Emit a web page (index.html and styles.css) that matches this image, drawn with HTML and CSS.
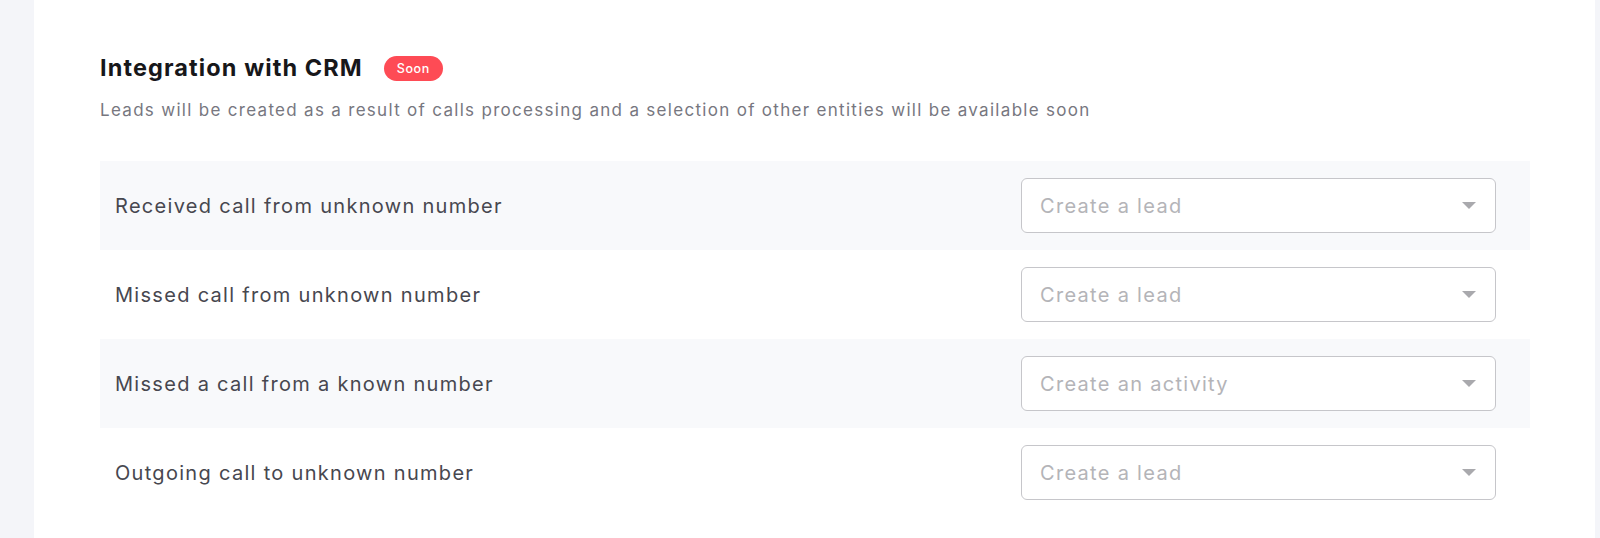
FILE: index.html
```html
<!DOCTYPE html>
<html lang="en">
<head>
<meta charset="utf-8">
<title>Integration with CRM</title>
<link rel="stylesheet" href="styles.css">
</head>
<body>
<div class="page">
  <main class="card">
    <header class="head">
      <div class="title-line">
        <h2 class="title">Integration with CRM</h2>
        <span class="badge">Soon</span>
      </div>
      <p class="subtitle">Leads will be created as a result of calls processing and a selection of other entities will be available soon</p>
    </header>
    <div class="rows">
      <div class="row shaded">
        <span class="label">Received call from unknown number</span>
        <div class="select"><span class="placeholder">Create a lead</span><span class="caret"></span></div>
      </div>
      <div class="row">
        <span class="label">Missed call from unknown number</span>
        <div class="select"><span class="placeholder">Create a lead</span><span class="caret"></span></div>
      </div>
      <div class="row shaded">
        <span class="label">Missed a call from a known number</span>
        <div class="select"><span class="placeholder">Create an activity</span><span class="caret"></span></div>
      </div>
      <div class="row">
        <span class="label">Outgoing call to unknown number</span>
        <div class="select"><span class="placeholder">Create a lead</span><span class="caret"></span></div>
      </div>
    </div>
  </main>
</div>
</body>
</html>
```

FILE: styles.css
```css
* { box-sizing: border-box; }
html, body { margin: 0; padding: 0; height: 100%; }
body {
  background: #f4f5f9;
  font-family: Inter, "Noto Sans", sans-serif;
}
.page {
  display: flex;
  height: 538px;
  padding-left: 34px;
  padding-right: 5px;
  overflow: hidden;
}
.card {
  flex: 1;
  background: #ffffff;
  padding: 54px 0 0 66px;
}
.head { width: 1430px; }
.title-line {
  display: flex;
  align-items: center;
  gap: 21px;
  height: 28px;
}
.title {
  margin: 0;
  font-size: 23.5px;
  line-height: 28px;
  font-weight: 700;
  color: #17171a;
  letter-spacing: 1.1px;
}
.badge {
  display: inline-flex;
  align-items: center;
  justify-content: center;
  width: 59px;
  height: 25px;
  border-radius: 13px;
  background: #fe4b55;
  color: #ffffff;
  font-size: 12.5px;
  font-weight: 500;
  letter-spacing: 0.6px;
}
.subtitle {
  margin: 16px 0 0;
  font-size: 17px;
  line-height: 24px;
  color: #77777f;
  letter-spacing: 1.3px;
}
.rows {
  margin-top: 39px;
  width: 1430px;
}
.row {
  display: flex;
  align-items: center;
  justify-content: space-between;
  height: 89px;
  padding: 0 34px 0 15px;
}
.row.shaded { background: #f8f9fb; }
.label {
  font-size: 20px;
  color: #47474f;
  letter-spacing: 1.3px;
}
.select {
  display: flex;
  align-items: center;
  justify-content: space-between;
  width: 475px;
  height: 55px;
  padding: 0 19px 0 18px;
  background: #ffffff;
  border: 1px solid #c6c6ca;
  border-radius: 6px;
}
.placeholder {
  font-size: 20px;
  color: #b4b4b8;
  letter-spacing: 1.3px;
}
.caret {
  width: 0;
  height: 0;
  border-left: 7px solid transparent;
  border-right: 7px solid transparent;
  border-top: 7px solid #a9a9ad;
}
```
